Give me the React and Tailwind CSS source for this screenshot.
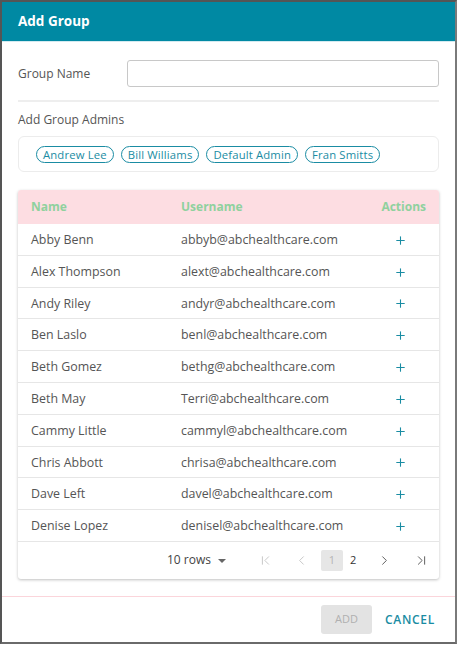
import React from "react";
import { ChevronFirst, ChevronLast, ChevronLeft, ChevronRight, Plus } from "lucide-react";

const rows = [
  ["Abby Benn", "abbyb@abchealthcare.com"],
  ["Alex Thompson", "alext@abchealthcare.com"],
  ["Andy Riley", "andyr@abchealthcare.com"],
  ["Ben Laslo", "benl@abchealthcare.com"],
  ["Beth Gomez", "bethg@abchealthcare.com"],
  ["Beth May", "Terri@abchealthcare.com"],
  ["Cammy Little", "cammyl@abchealthcare.com"],
  ["Chris Abbott", "chrisa@abchealthcare.com"],
  ["Dave Left", "davel@abchealthcare.com"],
  ["Denise Lopez", "denisel@abchealthcare.com"],
];

const admins = ["Andrew Lee", "Bill Williams", "Default Admin", "Fran Smitts"];

export default function App() {
  return (
    <div className="bg-white w-[460px] h-[645px]" style={{ fontFamily: '"Open Sans", sans-serif' }}>
      <div className="w-[457px] h-[644px] border-2 border-[#555] border-r-[#7a7a7a] border-b-[#6a6a6a] flex flex-col">
        <div className="h-[40px] bg-[#0089a3] border-b border-[#d3eaf0] flex items-center pl-[16px] shrink-0">
          <span className="text-white font-bold text-[13.5px] -mt-[1px]">Add Group</span>
        </div>
        <div className="px-[16px] flex flex-col">
          <div className="flex items-center mt-[18px]">
            <span className="w-[109px] text-[12px] text-[#555]">Group Name</span>
            <div className="h-[27px] flex-1 border border-[#c8c8c8] rounded-[3px]" />
          </div>
          <div className="h-[2px] bg-[#eeeeee] mt-[13px]" />
          <div className="text-[12px] text-[#555] mt-[10px] leading-[16px]">Add Group Admins</div>
          <div className="mt-[8px] h-[36px] border border-[#ececec] rounded-[6px] flex items-center gap-[7px] pl-[17px]">
            {admins.map((a) => (
              <span
                key={a}
                className="h-[17px] px-[6px] border border-[#1a8ca3] rounded-full text-[11.3px] tracking-[0.15px] leading-[15px] text-[#1a8ca3] flex items-center"
              >
                {a}
              </span>
            ))}
          </div>
          <div className="mt-[18px] rounded-[3px] shadow-[0_1px_3px_rgba(0,0,0,0.25)] bg-white">
            <div className="h-[34px] bg-[#fddde2] flex items-center text-[12px] font-bold text-[#8fd19e] rounded-t-[3px]">
              <span className="w-[163px] pl-[13px]">Name</span>
              <span className="flex-1">Username</span>
              <span className="pr-[13px]">Actions</span>
            </div>
            {rows.map(([n, u]) => (
              <div key={n} className="h-[31.8px] border-b border-[#e6e6e6] flex items-center text-[12.4px] text-[#555] pt-[2px]">
                <span className="w-[163px] pl-[13px]">{n}</span>
                <span className="flex-1">{u}</span>
                <span className="w-[60px] flex justify-center pr-[18px]">
                  <Plus size={13} strokeWidth={2} color="#1a8ca3" />
                </span>
              </div>
            ))}
            <div className="h-[37px] flex items-center text-[12px] text-[#444]">
              <div className="ml-[149px] flex items-center">
                <span>10 rows</span>
                <svg width="10" height="6" viewBox="0 0 10 6" className="ml-[6px] mt-[2px]">
                  <path d="M1 1 L5 5 L9 1 Z" fill="#666" />
                </svg>
              </div>
              <ChevronFirst size={15} strokeWidth={1.5} color="#c4c4c4" className="ml-[31px]" />
              <ChevronLeft size={15} strokeWidth={1.5} color="#c4c4c4" className="ml-[21px]" />
              <span className="ml-[12px] w-[22px] h-[21px] bg-[#e6e6e6] rounded-[2px] text-[#b5b5b5] text-[11px] flex items-center justify-center">1</span>
              <span className="ml-[7px] text-[11px] text-[#333]">2</span>
              <ChevronRight size={15} strokeWidth={1.5} color="#555" className="ml-[21px]" />
              <ChevronLast size={15} strokeWidth={1.5} color="#555" className="ml-[22px]" />
            </div>
          </div>
        </div>
        <div className="mt-auto border-t border-[#fbd5db] h-[46px] flex items-center justify-end pr-[20px] gap-[13px]">
          <span className="w-[51px] h-[29px] bg-[#e3e3e3] rounded-[3px] text-[#b0b0b0] text-[11px] flex items-center justify-center">ADD</span>
          <span className="text-[12px] font-semibold text-[#1a8ca3] tracking-[0.7px]">CANCEL</span>
        </div>
      </div>
    </div>
  );
}
